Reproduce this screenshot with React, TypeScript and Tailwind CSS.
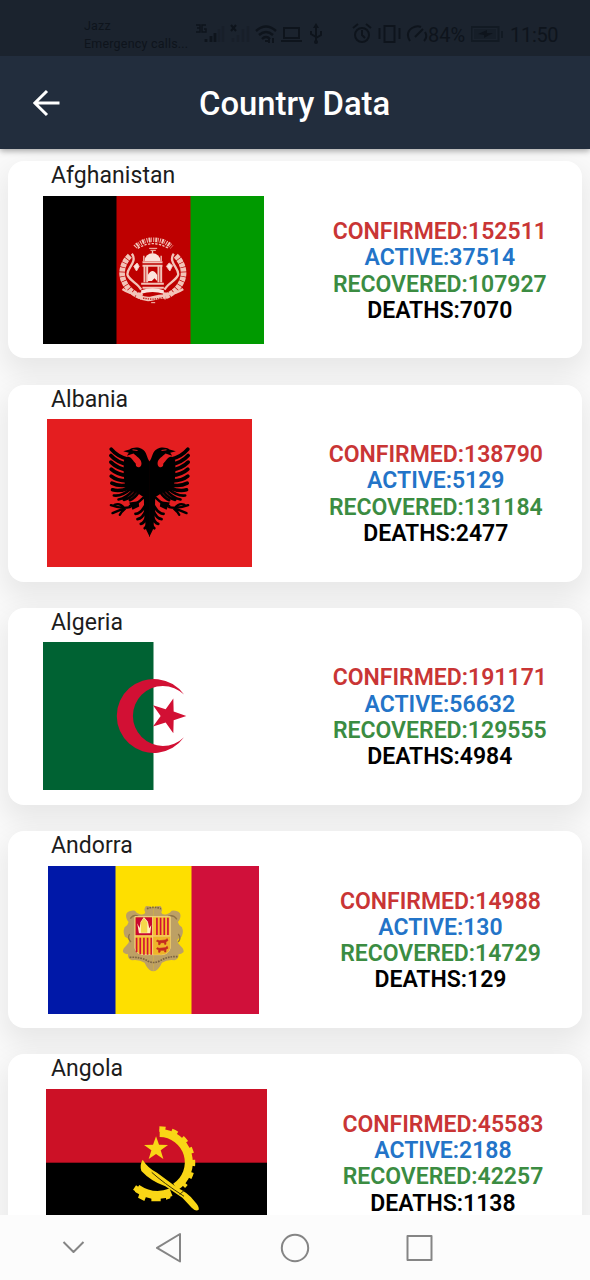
import React from "react";

const line = { fill: "none", stroke: "currentColor" } as const;

function AfghanistanFlag() {
  return (
    <svg className="block h-[148px] w-[221.5px]" viewBox="0 0 221.5 148">
      <rect width="74" height="148" fill="#000" />
      <rect x="73.5" width="75" height="148" fill="#be0000" />
      <rect x="147.5" width="74" height="148" fill="#009a00" />
      <g transform="translate(67.5 29) scale(.3333)" fill="none" stroke="#f3c4b8">
        <path d="M58 92C38 112 28 142 40 168c10 24 30 40 54 48M196 92c20 20 30 50 18 76-10 24-30 40-54 48" strokeWidth="17" strokeDasharray="12 2" />
        <path d="M64 86C84 112 42 134 52 152S82 176 92 194M190 86C170 112 212 134 202 152S172 176 162 194" strokeWidth="7" />
        <path d="M36 192c18 12 42 18 60 14M218 192c-18 12-42 18-60 14" strokeWidth="8" />
        <path d="M74 66C100 38 154 36 184 66" strokeWidth="14" strokeDasharray="3 3 6 2 2 4" />
        <path d="M82 70q44-28 92 0" strokeWidth="4" strokeDasharray="7 4" />
        <path d="M116 70h24M120 76h16" strokeWidth="3" />
        <path d="M96 122h60M96 112h60M102 122v50M110 122v50M144 122v50M152 122v50M92 176h68M96 188h64" strokeWidth="6" />
        <path d="M102 108a24 23 0 0 1 48 0z" fill="#fbe3dc" stroke="none" />
        <path d="M126 78v10M100 92v16M152 92v16" strokeWidth="4" />
        <path d="M112 168v-18q14-24 28 0v18l-8-8-8 8z" fill="#fbe3dc" stroke="none" />
        <path d="M92 196q34-12 68 0v10q-34-10-68 0z" fill="#fbe3dc" stroke="none" />
        <path d="M86 214q20 12 40 6t40-6" strokeWidth="13" />
        <path d="M98 219q28 7 60-1" stroke="#b71812" strokeWidth="4" strokeDasharray="4 3" />
        <path d="M70 124l10-10 6 10-8 14zM168 124l8-10 10 8-8 16zM122 233h12" fill="#fbe3dc" strokeWidth="3" />
      </g>
    </svg>
  );
}

function EagleHalf() {
  return (
    <g>
      <path d="M164 82C154 72 157 52 139 43C128 37 112 39 103 45L84 50L101 55L95 64L115 57C124 67 143 74 138 92C134 102 120 99 122 88C112 78 107 63 94 68L86 78C84 120 86 140 94 166L124 174L146 188L147 240L153 286L164 308Z" fill="#000" />
      <path d="M48 44Q66 66 98 74M47 63Q66 84 98 90M47 83Q66 102 98 107M48 104Q66 121 98 123M48 125Q66 140 98 139M50 146Q70 157 100 151M52 166Q74 172 102 160" fill="none" stroke="#000" strokeWidth="11" strokeLinecap="round" />
      <path d="M56 183Q80 186 104 165M70 195Q94 190 112 169M86 196Q106 192 122 171M104 197Q118 192 130 174" fill="none" stroke="#000" strokeWidth="8" strokeLinecap="round" />
      <path d="M144 190Q122 212 104 214M104 218Q80 224 47 212M92 220Q70 228 52 236M90 222Q78 232 74 241M86 219Q74 204 58 211" fill="none" stroke="#000" strokeWidth="7" strokeLinecap="round" />
      <path d="M102 204L130 200L132 216L112 226Z" fill="#000" />
      <path d="M150 214Q136 238 121 238M152 228Q142 252 127 254M154 244Q148 266 137 268M158 262Q154 278 149 281" fill="none" stroke="#000" strokeWidth="8.5" strokeLinecap="round" />
      <path d="M112 46l15 2" stroke="#e41e20" strokeWidth="3" />
    </g>
  );
}

function AlbaniaFlag() {
  return (
    <svg className="block h-[148px] w-[205.5px]" viewBox="0 0 205.5 148">
      <rect width="205.5" height="148" fill="#e41e20" />
      <g transform="translate(48.2 15.5) scale(.3333)">
        <EagleHalf />
        <g transform="translate(326 0) scale(-1 1)">
          <EagleHalf />
        </g>
      </g>
    </svg>
  );
}

function AlgeriaFlag() {
  return (
    <svg className="block h-[148px] w-[221.5px]" viewBox="0 0 221.5 148">
      <rect width="221.5" height="148" fill="#fff" />
      <rect width="110.5" height="148" fill="#006233" />
      <g transform="translate(57 17.9) scale(.3333)" fill="#d21034">
        <path d="M252 104A111 111 0 1 0 252 232A90 90 0 1 1 252 104Z" />
        <path d="M259 168L221 155L220 116L197 148L159 136L182 168L159 200L197 188L220 220L221 181Z" />
      </g>
    </svg>
  );
}

function ShieldFrameHalf() {
  return (
    <path
      d="M130 55Q122 46 108 48Q100 58 106 67Q104 76 90 73Q80 70 75 62Q58 60 50 70Q44 82 56 96Q54 106 44 112Q38 126 45 140Q54 144 58 150Q58 160 48 168Q38 176 39 186Q46 194 54 192Q52 206 66 211Q88 208 104 218Q112 236 124 243L130 244Z"
      fill="#bda064"
    />
  );
}

function AndorraFlag() {
  return (
    <svg className="block h-[148px] w-[211px]" viewBox="0 0 211 148">
      <rect width="211" height="148" fill="#0018a8" />
      <rect x="67.5" width="76.5" height="148" fill="#fedf00" />
      <rect x="143.5" width="67.5" height="148" fill="#d0103a" />
      <g transform="translate(61.6 24) scale(.3333)">
        <g transform="translate(1 0)">
          <ShieldFrameHalf />
          <g transform="translate(260 0) scale(-1 1)">
            <ShieldFrameHalf />
          </g>
        </g>
        <path d="M62 86q10-14 24-7M176 79q16-6 26 9M60 132q-8 12 4 24M206 132q10 12 0 24" fill="none" stroke="#8f7445" strokeWidth="4" />
        <path d="M112 56q20-8 42 0M60 202q34-2 56 12q18 8 36-2q24-14 54-12" fill="none" stroke="#7c6440" strokeWidth="5" strokeDasharray="5 3" />
        <path d="M76 80h106v94q-6 20-27 20h-51q-24 0-28-20z" fill="#f6bd2d" stroke="#f1d586" strokeWidth="3" />
        <path d="M78 82h50v54H78z" fill="#ca0730" />
        <path d="M88 130l-5-30 7 14 3-18 10-15 12 14 4 20 6-10-3 25z" fill="#fff0bb" />
        <path d="M94 128V97l9-13 10 13v31z" fill="#f6d64b" />
        <path d="M142 83v52M153 83v52M164 83v52M175 83v52M81 143v44M92 143v50M103 143v51M114 143v51M125 143v51" stroke="#d11234" strokeWidth="5" />
        <path d="M131 137h51v37q-5 20-27 20h-24z" fill="#efb42a" />
        <path d="M143 150l6 2 18-2 6-4 2 6-6 3v8h-4v-5h-12l-2 6h-4v-8l-6-2zM143 173l6 2 18-2 6-4 2 6-6 3v8h-4v-5h-12l-2 6h-4v-8l-6-2z" fill="#c42a20" stroke="#c42a20" strokeWidth="2" />
        <path d="M129 80v113M76 138h106" stroke="#f4d180" strokeWidth="3" />
      </g>
    </svg>
  );
}

function AngolaFlag() {
  return (
    <svg className="block h-[148px] w-[221px]" viewBox="0 0 221 148">
      <rect width="221" height="148" fill="#000" />
      <rect width="221" height="73.7" fill="#cc1126" />
      <g transform="translate(73.7 21) scale(.3333)">
        <path d="M120 69A88 88 0 0 1 167 231M154 247Q101 268 52 235" fill="none" stroke="#f9d616" strokeWidth="24" />
        <path d="M119 57A101 101 0 0 1 190 228" fill="none" stroke="#f9d616" strokeWidth="17" strokeDasharray="18 19" />
        <path d="M49 226l12 8-8 14-13-9zM61 246l20 9-7 18-19-10zM95 256h28v18H95zM139 249l13-3v19l-13 4z" fill="#f9d616" />
        <path d="M109 79L118 104L145 105L123 121L131 147L109 132L87 147L95 121L73 105L100 104Z" fill="#f9d616" />
        <path d="M69 149Q59 164 65 183Q94 214 137 229L188 263L216 293Q229 306 237 299Q240 290 223 272Q202 246 174 234L112 188Q84 174 69 149Z" fill="#f9d616" />
        <path d="M96 187Q130 218 193 259M180 253l14-12" fill="none" stroke="#3a2f05" strokeWidth="3" />
      </g>
    </svg>
  );
}

const countries = [
  { name: "Afghanistan", confirmed: 152511, active: 37514, recovered: 107927, deaths: 7070, Flag: AfghanistanFlag },
  { name: "Albania", confirmed: 138790, active: 5129, recovered: 131184, deaths: 2477, Flag: AlbaniaFlag },
  { name: "Algeria", confirmed: 191171, active: 56632, recovered: 129555, deaths: 4984, Flag: AlgeriaFlag },
  { name: "Andorra", confirmed: 14988, active: 130, recovered: 14729, deaths: 129, Flag: AndorraFlag },
  { name: "Angola", confirmed: 45583, active: 2188, recovered: 42257, deaths: 1138, Flag: AngolaFlag },
];

function StatusBar() {
  return (
    <div className="flex h-14 shrink-0 bg-[#1b232e] pl-[84px] text-[#0e141c]">
      <div className="w-[111px] shrink-0 pt-[17px] text-[12.5px] leading-[18px] tracking-[0.2px] whitespace-nowrap">
        <div>Jazz</div>
        <div>Emergency calls...</div>
      </div>
      <svg className="block h-14 w-[233px] shrink-0" viewBox="195 0 233 56" {...line} strokeWidth="2">
        <path d="M196 25h4v3h-3 3v4h-4M206 25h-4v7h4v-3h-2" strokeWidth="1.4" />
        <path d="M206 42v-3M211 42v-6M215 42v-9" strokeWidth="2.8" />
        <path d="M219 42V29M223 42V26M233 42v-4M238 42v-7M243 42V29M248 42V26" strokeWidth="2.3" opacity=".25" />
        <path d="M231 25l5 6M236 25l-5 6" />
        <path d="M256 31q10-9 20 0M259 35q7-6 14 0M262 39q4-4 8 0" strokeWidth="2.4" />
        <path d="M265 41h3M269 38v5M273 38v5" />
        <path d="M284 28h15v10h-15zM281 41h21" />
        <path d="M316 27v15M316 37l-5-3v-3M316 38l5-3v-4" />
        <path d="M316 23l-3 5h6z" fill="currentColor" stroke="none" />
        <circle cx="316" cy="42" r="2" fill="currentColor" stroke="none" />
        <circle cx="362" cy="35" r="7" />
        <path d="M362 30v5l3 3M353 28l5-4M366 24l5 4M384.5 26h10v16h-10zM379.5 28v11M399.5 28v11" />
        <path d="M410 41q-5-8 2-13 5-3 9-1M425 32q3 5-1 9M415 37l8-8" />
      </svg>
      <div className="mt-[21px] w-[43px] text-[20px] leading-7">84%</div>
      <svg className="block h-14 w-[34px] shrink-0" viewBox="471 0 34 56" {...line} strokeWidth="2">
        <path d="M471.5 27h27v14h-27zM502 31v7" opacity=".6" />
        <path d="M474 29h22v10h-22z" fill="currentColor" opacity=".3" stroke="none" />
        <path d="M478 34l9-4v3h6l-9 5v-3z" fill="currentColor" stroke="none" />
      </svg>
      <div className="mt-[21px] ml-[5px] text-[20px] leading-7 tracking-[-0.3px]">11:50</div>
    </div>
  );
}

export default function App() {
  return (
    <div className="flex h-[1280px] w-[590px] flex-col overflow-hidden bg-[#fafafa] font-['Roboto',sans-serif]">
      <header className="relative z-10 shrink-0 shadow-[0_2px_6px_rgba(0,0,0,0.35)]">
        <StatusBar />
        <div className="flex h-[92.5px] items-center bg-[#222d3d] text-white">
          <svg className="mt-px ml-[33px] block h-7 w-7" viewBox="0 0 28 28" {...line} strokeWidth="3">
            <path d="M14 2L1.8 14 14 26M2 14h24.5" />
          </svg>
          <h1 className="mt-[3px] ml-[138px] text-[32.8px] leading-10 font-medium whitespace-nowrap">Country Data</h1>
        </div>
      </header>
      <main className="flex min-h-0 flex-1 flex-col gap-[26.2px] overflow-hidden px-2 pt-[12.9px]">
        {countries.map(({ name, confirmed, active, recovered, deaths, Flag }) => (
          <section key={name} className="h-[197px] shrink-0 rounded-2xl bg-white shadow-[0_12px_28px_5px_rgba(0,0,0,0.075)]">
            <h2 className="h-[34.6px] pl-[43px] text-[23px] leading-[29px] font-normal tracking-[0.05px] text-[#1c1c1c]">{name}</h2>
            <div className="flex justify-around">
              <Flag />
              <div className="flex -translate-x-[0.5px] flex-col items-center pt-[23px] text-[23px] leading-[26.3px] font-semibold whitespace-nowrap">
                <p className="text-[#c93535]">CONFIRMED:{confirmed}</p>
                <p className="text-[#2374c8]">ACTIVE:{active}</p>
                <p className="text-[#3b8c42]">RECOVERED:{recovered}</p>
                <p className="leading-[25.3px] text-black">DEATHS:{deaths}</p>
              </div>
            </div>
          </section>
        ))}
      </main>
      <nav className="h-[65.5px] shrink-0 bg-[#fcfcfc] text-[#858585]">
        <svg className="block h-[65px] w-[590px]" viewBox="0 1214.5 590 65" {...line} strokeWidth="2" strokeLinejoin="round">
          <path d="M63.5 1241.5l10 10 10-10M180 1233.5v27.5l-23-13.7zM407.5 1235.5h24v24h-24z" />
          <circle cx="295" cy="1247.5" r="13.2" />
        </svg>
      </nav>
    </div>
  );
}
